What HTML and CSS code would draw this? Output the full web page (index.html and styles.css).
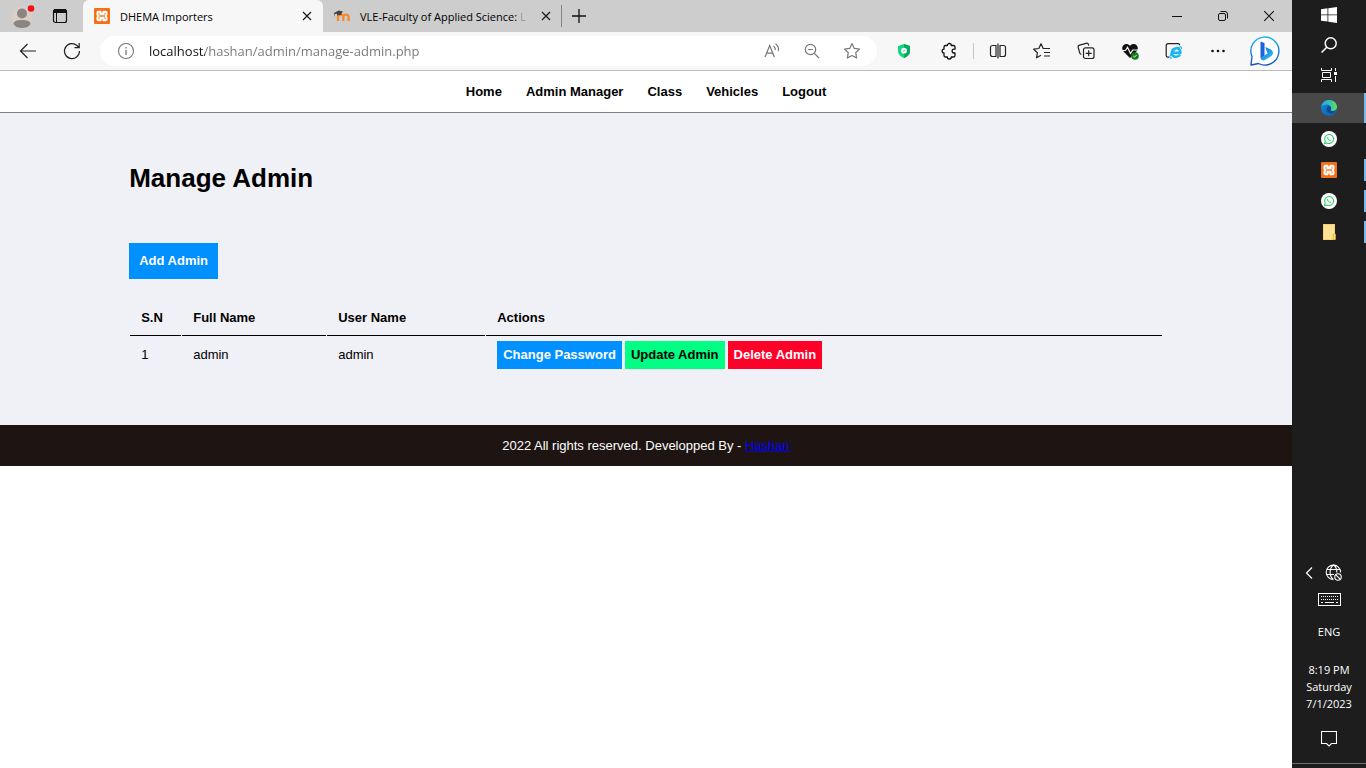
FILE: index.html
```html
<!DOCTYPE html>
<html lang="en">
<head>
<meta charset="utf-8">
<title>DHEMA Importers</title>
<link rel="stylesheet" href="styles.css">
</head>
<body>
<svg class="defs" aria-hidden="true">
  <defs>
    <linearGradient id="edge-blue" x1="0" y1="0" x2="1" y2="1"><stop offset="0" stop-color="#1a86d8"/><stop offset="1" stop-color="#0f5ba8"/></linearGradient>
    <linearGradient id="edge-green" x1="0" y1="0" x2="1" y2="0"><stop offset="0" stop-color="#2aa9e0"/><stop offset=".6" stop-color="#35c4b0"/><stop offset="1" stop-color="#6fdc4a"/></linearGradient>
    <linearGradient id="bing-ring" x1="0" y1="0" x2="0" y2="1"><stop offset="0" stop-color="#19b5f1"/><stop offset="1" stop-color="#1a4fc4"/></linearGradient>
    <linearGradient id="bing-b" x1="0" y1="0" x2="1" y2="1"><stop offset="0" stop-color="#1b6fe0"/><stop offset="1" stop-color="#27c4f2"/></linearGradient>
  </defs>
  <symbol id="xampp" viewBox="0 0 16 16">
    <rect width="16" height="16" rx="1" fill="#f2701a"/>
    <path d="M4.500 2.800h1.700c1 0 1.400.7 1.400 1.500v.5h.8v-.5c0-.8.4-1.500 1.400-1.500h1.700c1.300 0 2 .8 2 1.900v1.800c0 .7-.4 1.200-.9 1.500.5.3.9.8.9 1.500v1.800c0 1.100-.7 1.900-2 1.900H9.800c-1 0-1.400-.7-1.400-1.500v-.5h-.8v.5c0 .8-.4 1.500-1.400 1.500H4.500c-1.300 0-2-.8-2-1.900V9.500c0-.7.4-1.200.9-1.500-.5-.3-.9-.8-.9-1.500V4.700c0-1.100.7-1.900 2-1.900z" fill="#fff"/>
    <path d="M5 4.700v1.200C5 7.400 5.700 8 6.800 8h2.400C10.300 8 11 7.400 11 5.900V4.700M5 11.300v-1.200C5 8.600 5.700 8 6.800 8h2.400c1.100 0 1.800.6 1.800 2.100v1.200" fill="none" stroke="#f2701a" stroke-width=".9"/>
  </symbol>
  <symbol id="whatsapp" viewBox="0 0 16 16">
    <circle cx="8" cy="8" r="8" fill="#fff"/>
    <path d="M3.400 12.700l.8-2.500a4.500 4.500 0 1 1 1.700 1.700z" fill="none" stroke="#35cf6c" stroke-width="1.100"/>
    <path d="M6.500 5.800c-.8.600-.4 1.900.7 3s2.400 1.500 3 .7l-1.100-.9-.7.400-1.200-1.200.400-.7z" fill="#35cf6c"/>
  </symbol>
  <symbol id="close" viewBox="0 0 10 10"><path d="M1 1l8 8M9 1L1 9" fill="none" stroke="#1a1a1a" stroke-width="1.200"/></symbol>
</svg>

<div class="browser">
  <header class="titlebar">
    <button class="chrome-btn profile" aria-label="Profile">
      <svg width="24" height="28" viewBox="0 0 24 28"><circle cx="11" cy="14.500" r="10.500" fill="#d8cfc9"/><circle cx="11" cy="11.500" r="5" fill="#8a8581"/><path d="M2.500 22c0-3 3.500-4 8.500-4s8.500 1 8.500 4c-2 3-5 4-8.500 4s-6.500-1-8.500-4z" fill="#8a8581"/><circle cx="20" cy="6.500" r="3.300" fill="#f50f0f"/></svg>
    </button>
    <button class="chrome-btn workspaces" aria-label="Tab actions">
      <svg width="16" height="16" viewBox="0 0 16 16"><rect x="1.500" y="1.500" width="13" height="13" rx="2" fill="none" stroke="#111" stroke-width="1.200"/><path d="M1.500 4.500v-1a2 2 0 0 1 2-2h9a2 2 0 0 1 2 2v1z" fill="#111" stroke="#111"/><path d="M4.500 5v9" stroke="#111"/></svg>
    </button>
    <div class="tab tab-active">
      <svg width="16" height="16"><use href="#xampp"/></svg>
      <span class="tab-title">DHEMA Importers</span>
      <button class="chrome-btn tab-close" aria-label="Close tab"><svg width="10" height="10"><use href="#close"/></svg></button>
    </div>
    <div class="tab">
      <svg width="16" height="16" viewBox="0 0 16 16"><path d="M4 13V8.800a2.700 2.700 0 0 1 5.300 0V13M9.300 13V8.800a2.700 2.700 0 0 1 5.300 0V13" fill="none" stroke="#f68b28" stroke-width="2.300"/><path d="M0 5l4.500-2.600L9 3.500 7.600 5.200v1.600L3 7.400V5.800L1 6v3z" fill="#4a4440"/></svg>
      <span class="tab-title">VLE-Faculty of Applied Science: <span class="faded">L</span></span>
      <button class="chrome-btn tab-close" aria-label="Close tab"><svg width="10" height="10"><use href="#close"/></svg></button>
    </div>
    <button class="chrome-btn new-tab" aria-label="New tab"><svg width="14" height="14" viewBox="0 0 14 14"><path d="M7 0v14M0 7h14" stroke="#111" stroke-width="1.300"/></svg></button>
    <div class="window-controls">
      <button class="chrome-btn" aria-label="Minimize"><svg width="10" height="10" viewBox="0 0 10 10"><path d="M0 5.500h10" stroke="#111"/></svg></button>
      <button class="chrome-btn" aria-label="Restore"><svg width="10" height="10" viewBox="0 0 10 10" fill="none" stroke="#111"><rect x=".5" y="2.500" width="7" height="7" rx="1.500"/><path d="M2.500.5H7A2.500 2.500 0 0 1 9.500 3v4.500"/></svg></button>
      <button class="chrome-btn" aria-label="Close window"><svg width="12" height="12" viewBox="0 0 10 10"><path d="M1 1l8 8M9 1L1 9" stroke="#111" stroke-width=".9"/></svg></button>
    </div>
  </header>

  <div class="toolbar">
    <button class="chrome-btn tool" aria-label="Back"><svg width="18" height="16" viewBox="0 0 18 16" fill="none" stroke="#222" stroke-width="1.200"><path d="M17 8H1.500M8.500 1L1.500 8l7 7"/></svg></button>
    <button class="chrome-btn tool" aria-label="Refresh"><svg width="18" height="18" viewBox="0 0 18 18" fill="none" stroke="#222" stroke-width="1.200"><path d="M16.500 9A7.500 7.500 0 1 1 14 3.500L16 5.500M16.200 1v4.700h-4.700"/></svg></button>
    <div class="address">
      <button class="chrome-btn site-info" aria-label="Site information"><svg width="18" height="18" viewBox="0 0 18 18" fill="none" stroke="#777"><circle cx="9" cy="9" r="7.500" stroke-width="1.100"/><path d="M9 8v5M9 5v1.500" stroke-width="1.300"/></svg></button>
      <input class="url" type="text" aria-label="Address" value="localhost/hashan/admin/manage-admin.php">
      <button class="chrome-btn address-tool" aria-label="Read aloud"><svg width="18" height="18" viewBox="0 0 18 18" fill="none" stroke="#777"><path d="M2 15l4.700-11.500L11.400 15M3.600 11.200h6.200" stroke-width="1.200"/><path d="M10.500 4q2 1.700 1.600 4.200M12.500 1.800q4 3.200 2.800 7.400" stroke-width="1.100"/></svg></button>
      <button class="chrome-btn address-tool" aria-label="Zoom"><svg width="16" height="16" viewBox="0 0 16 16" fill="none" stroke="#777" stroke-width="1.200"><circle cx="6.500" cy="6.500" r="5.200"/><path d="M4 6.500h5M10.300 10.300L15 15"/></svg></button>
      <button class="chrome-btn address-tool" aria-label="Add to favorites"><svg width="18" height="18" viewBox="0 0 18 18" fill="none" stroke="#777" stroke-width="1.200" stroke-linejoin="round"><path d="M9 1.500l2.300 4.900 5.200.7-3.800 3.600.9 5.300L9 13.500 4.400 16l.9-5.300L1.500 7.100l5.200-.7z"/></svg></button>
    </div>
    <button class="chrome-btn tool shield" aria-label="Protection extension"><svg width="14" height="16" viewBox="0 0 14 16"><path d="M7 1l6 2v5c0 3.500-2.500 5.500-6 7-3.500-1.500-6-3.500-6-7V3z" fill="#12d67c"/><path d="M7 1l6 2v5c0 3.500-2.500 5.500-6 7z" fill="#07a860"/><circle cx="7" cy="7.700" r="2.900" fill="#fff"/><path d="M6 8.800l2-2" stroke="#5caecb"/></svg></button>
    <button class="chrome-btn tool extensions" aria-label="Extensions"><svg width="16" height="18" viewBox="0 0 16 18" fill="none" stroke="#111" stroke-width="1.300" stroke-linejoin="round"><path d="M4.500 3.500h1.800a2 2 0 0 1 4 0h2.200a1.500 1.500 0 0 1 1.500 1.500v2.200h-1a1.900 1.900 0 0 0 0 3.800h1v2.500a1.500 1.500 0 0 1-1.500 1.500h-2.200a2 2 0 0 1-4 0H4.500A1.500 1.500 0 0 1 3 13.500V11a1.900 1.900 0 0 1 0-3.800V5a1.500 1.500 0 0 1 1.500-1.500z"/></svg></button>
    <span class="divider"></span>
    <button class="chrome-btn tool" aria-label="Split screen"><svg width="18" height="18" viewBox="0 0 18 18" fill="none" stroke="#222" stroke-width="1.200"><path d="M7 3.500H3.500a2 2 0 0 0-2 2v7a2 2 0 0 0 2 2H7zM11 3.500h3.500a2 2 0 0 1 2 2v7a2 2 0 0 1-2 2H11zM9 1.500v15"/></svg></button>
    <button class="chrome-btn tool" aria-label="Favorites"><svg width="18" height="18" viewBox="0 0 18 18" fill="none" stroke="#222" stroke-width="1.200" stroke-linejoin="round"><path d="M8 13.300l-4.500 2.500.9-5-3.700-3.600 5.100-.7L8 1.700l2.200 4.800H17M11 10.500h6M11 14h6"/></svg></button>
    <button class="chrome-btn tool" aria-label="Collections"><svg width="18" height="18" viewBox="0 0 18 18" fill="none" stroke="#222" stroke-width="1.200"><rect x="6.500" y="5.800" width="10.500" height="10.700" rx="2"/><path d="M11.700 8.300v6M8.700 11.300h6M4.300 12.500l-1.300-.8L1.200 5.500a2 2 0 0 1 1.400-2.400l6.500-1.800a2 2 0 0 1 2.400 1.400l.3 1"/></svg></button>
    <button class="chrome-btn tool" aria-label="Browser essentials"><svg width="18" height="18" viewBox="0 0 18 18"><path d="M9 16L2.500 9.500C-1.500 5 4.500-.8 9 3.800 13.500-.8 19.500 5 15.500 9.500z" fill="#111"/><path d="M0 8.500h4.500l2-3.300 3 6.300 2.200-3.500H18" fill="none" stroke="#f7f7f7" stroke-width="1.200"/><circle cx="14" cy="14" r="3.800" fill="#107c1c"/><path d="M12.300 14l1.200 1.200 2.200-2.300" fill="none" stroke="#fff" stroke-width=".9"/></svg></button>
    <button class="chrome-btn tool" aria-label="Internet Explorer mode"><svg width="18" height="18" viewBox="0 0 18 18" fill="none"><path d="M4 15.200H3a1.800 1.800 0 0 1-1.800-1.800V3.500A1.800 1.800 0 0 1 3 1.700h10a1.800 1.800 0 0 1 1.800 1.500" stroke="#222" stroke-width="1.200"/><path d="M6.800 10.700h8.600c.2-6.200-8.600-6-8.600 0 0 4.800 6.200 5.200 8.300 1.900" stroke="#19b4f2" stroke-width="2.500"/><path d="M7 15.800c-3.500 1.500-3-3 2-7.300 4-3.600 8.500-5.200 7.300-1.500" stroke="#19b4f2" stroke-width="1.100"/></svg></button>
    <button class="chrome-btn tool" aria-label="More"><svg width="14" height="4" viewBox="0 0 14 4" fill="#111"><circle cx="1.500" cy="2" r="1.300"/><circle cx="7" cy="2" r="1.300"/><circle cx="12.500" cy="2" r="1.300"/></svg></button>
    <button class="chrome-btn bing" aria-label="Bing Chat"><svg width="32" height="32" viewBox="0 0 32 32"><path d="M2 30l1-8.500A14 14 0 1 1 9.500 28.500z" fill="#fff" stroke="url(#bing-ring)" stroke-width="1.400" stroke-linejoin="round"/><path d="M11.500 6.500l4 1.600v13l-4 2.200z" fill="#1c62dc"/><path d="M16.200 12l5.300 2.300c3.300 1.600 3 5.300.5 7l-6 3.700c-2 1-4 .3-4.500-2l7-4.500z" fill="url(#bing-b)"/></svg></button>
  </div>

  <div class="page">
    <nav class="menu">
      <a href="#home">Home</a>
      <a href="#admin">Admin Manager</a>
      <a href="#class">Class</a>
      <a href="#vehicles">Vehicles</a>
      <a href="#logout">Logout</a>
    </nav>
    <main class="content">
      <h1>Manage Admin</h1>
      <a class="btn btn-add" href="#add">Add Admin</a>
      <table class="admins">
        <colgroup><col class="col-sn"><col class="col-name"><col class="col-user"><col></colgroup>
        <thead>
          <tr><th>S.N</th><th>Full Name</th><th>User Name</th><th>Actions</th></tr>
        </thead>
        <tbody>
          <tr>
            <td>1</td><td>admin</td><td>admin</td>
            <td>
              <div class="actions">
                <a class="btn" href="#password">Change Password</a>
                <a class="btn btn-update" href="#update">Update Admin</a>
                <a class="btn btn-delete" href="#delete">Delete Admin</a>
              </div>
            </td>
          </tr>
        </tbody>
      </table>
    </main>
    <footer class="footer">2022 All rights reserved. Developped By - <a href="#hashan">Hashan</a></footer>
  </div>
</div>

<aside class="taskbar">
  <button class="task" aria-label="Start"><svg width="16" height="16" viewBox="0 0 16 16" fill="#fff"><path d="M0 2.200l6.500-.9v6.200H0zM7.300 1.200L16 0v7.500H7.300zM0 8.300h6.500v6.300L0 13.700zM7.300 8.300H16V16l-8.700-1.200z"/></svg></button>
  <button class="task" aria-label="Search"><svg width="16" height="16" viewBox="0 0 16 16" fill="none" stroke="#fff" stroke-width="1.500"><circle cx="9.700" cy="6.300" r="5.500"/><path d="M5.800 10.200L.5 15.500"/></svg></button>
  <button class="task" aria-label="Task view"><svg width="16" height="16" viewBox="0 0 16 16" fill="none" stroke="#fff"><path d="M.5 1v2.500h10V1M.5 15v-2.500h10V15M1.500 5.500h8v5h-8zM14.500 1v3M14.500 9v6"/><path d="M13 5h3v3h-3z" fill="#fff" stroke="none"/></svg></button>
  <div class="apps">
    <button class="task task-active running" aria-label="Microsoft Edge"><svg width="16" height="16" viewBox="0 0 16 16"><circle cx="8" cy="8" r="8" fill="url(#edge-blue)"/><path d="M.2 7C1 2.500 4.500 0 8 0c5 0 8 3.500 8 7 0 2.500-2 4-4.300 4-1.700 0-2.400-.7-1.900-1.500C11 7.300 8.700 4.600 5.500 4.600 3 4.600 1 5.800.2 7z" fill="url(#edge-green)"/><path d="M5.500 9.500c0-2 1.200-3.300 2.700-3.700 1.800.7 2.300 2.400 1.600 3.700-.5.800.2 1.500 1.900 1.500 1.200 0 2.300-.3 3-1-.9 2.500-2.600 3.500-4.200 3.500-3 0-5-1.800-5-4z" fill="#104a8e"/></svg></button>
    <button class="task" aria-label="WhatsApp"><svg width="16" height="16"><use href="#whatsapp"/></svg></button>
    <button class="task running short" aria-label="XAMPP"><svg width="16" height="16"><use href="#xampp"/></svg></button>
    <button class="task running short" aria-label="WhatsApp chat"><svg width="16" height="16"><use href="#whatsapp"/></svg></button>
    <button class="task running short" aria-label="File Explorer"><svg width="14" height="16" viewBox="0 0 14 16"><path d="M1 0h12v16H1z" fill="#f3c94e"/><path d="M1.500.5h11V10h-2v5.500h-9z" fill="#fde293"/><path d="M11.500 10h2v5.500h-2z" fill="#fde293" stroke="#d9ae35" stroke-width=".6"/></svg></button>
  </div>
  <div class="tray">
    <div class="tray-row">
      <button class="chrome-btn" aria-label="Show hidden icons"><svg width="8" height="12" viewBox="0 0 8 12"><path d="M7 .5L1.500 6 7 11.500" fill="none" stroke="#fff" stroke-width="1.200"/></svg></button>
      <button class="chrome-btn" aria-label="Network"><svg width="17" height="17" viewBox="0 0 17 17" fill="none" stroke="#fff" stroke-width="1.100"><path d="M8.500 15.500A7.200 7.200 0 1 1 15.600 8.500M1.500 5.500h13.500M1.500 10.500H9M8.500 15.500c-4.500-3-4.500-11.500 0-14.500M8.500 1c2.500 1.800 3.500 4.500 3.300 7.500"/><circle cx="13" cy="13" r="3.200"/><path d="M10.800 10.800l4.400 4.400"/></svg></button>
    </div>
    <button class="chrome-btn keyboard" aria-label="Touch keyboard"><svg width="23" height="13" viewBox="0 0 23 13" fill="none" stroke="#fff"><rect x=".5" y=".5" width="22" height="12"/><path d="M3 3.500h17M3 6.500h17" stroke-dasharray="1 1"/><path d="M3 9.500h2M7 9.500h9M18 9.500h2"/></svg></button>
    <button class="chrome-btn lang">ENG</button>
    <button class="chrome-btn clock"><span>8:19 PM</span><span>Saturday</span><span>7/1/2023</span></button>
    <button class="chrome-btn notify" aria-label="Notifications"><svg width="16" height="16" viewBox="0 0 16 16" fill="none" stroke="#fff" stroke-width="1.100"><path d="M.5.500h15v12h-5L8 15l-2.500-2.500h-5z"/></svg></button>
  </div>
</aside>
</body>
</html>
```

FILE: styles.css
```css
* { box-sizing: border-box; }

body {
  margin: 0;
  min-height: 100vh;
  display: flex;
  background: #fff;
  font-family: "Liberation Sans", Arial, sans-serif;
  font-size: 13px;
  color: #000;
}

svg { display: block; flex: none; }
.defs { position: absolute; width: 0; height: 0; }

.browser {
  flex: 1;
  min-width: 0;
  display: flex;
  flex-direction: column;
}

.chrome-btn {
  display: flex;
  align-items: center;
  justify-content: center;
  flex: none;
  padding: 0;
  border: 0;
  background: none;
  font: inherit;
  color: inherit;
}

/* Tab strip */
.titlebar {
  display: flex;
  height: 32px;
  background: #cdcdcd;
  font-family: "Open Sans", "Noto Sans", sans-serif;
  font-size: 11px;
}
.profile { width: 46px; }
.workspaces { width: 28px; margin-right: 9px; }
.tab {
  display: flex;
  align-items: center;
  width: 239px;
  padding: 0 10px 0 11px;
  border-right: 1px solid transparent;
}
.tab-active {
  width: 240px;
  background: #f7f7f7;
  border-radius: 6px 6px 0 0;
}
.tab:not(.tab-active) {
  border-image: linear-gradient(transparent 6px, #888 6px, #888 26px, transparent 26px) 1;
}
.tab-title {
  flex: 1;
  min-width: 0;
  margin-left: 10px;
  white-space: nowrap;
}
.faded { color: #999; }
.tab-close { width: 10px; height: 10px; margin-left: 8px; }
.new-tab { width: 34px; }
.window-controls { display: flex; margin-left: auto; }
.window-controls .chrome-btn { width: 46px; }

/* Address bar and browser tools */
.toolbar {
  display: flex;
  align-items: center;
  height: 39px;
  padding: 0 2px 0 6px;
  background: #f7f7f7;
  border-bottom: 1px solid #bcbcbc;
}
.tool { width: 44px; height: 30px; }
.address {
  display: flex;
  align-items: center;
  flex: 1;
  min-width: 0;
  height: 30px;
  margin: 0 5px 0 6px;
  padding: 0 5px 0 17px;
  border-radius: 15px;
  background: #fff;
}
.site-info { width: 18px; }
.url {
  flex: 1;
  min-width: 0;
  margin-left: 14px;
  padding: 0;
  border: 0;
  outline: 0;
  font-family: "Open Sans", "Noto Sans", sans-serif;
  font-size: 13px;
  color: transparent;
  background: linear-gradient(to right, #111 56px, #767676 56px);
  background-clip: text;
  -webkit-background-clip: text;
}
.address-tool { width: 40px; height: 30px; }
.extensions { width: 46px; }
.divider { width: 1px; height: 16px; margin: 0 2px 0 1px; background: #c4c4c4; }
.bing { width: 50px; height: 38px; }

/* Site */
.page a { text-decoration: none; }
.menu {
  display: flex;
  justify-content: center;
  gap: 24px;
  padding: 13px 0;
  border-bottom: 1px solid #808080;
  background: #fff;
  line-height: 15px;
  font-weight: bold;
}
.menu a { color: #000; }
.content {
  padding: 50px 10% 51px;
  background: #f0f1f6;
}
h1 {
  margin: 0 0 50px;
  font-size: 26px;
  line-height: 30px;
}
.btn {
  display: inline-block;
  padding: 6px;
  background: #0090ff;
  color: #fff;
  font-weight: bold;
  line-height: 16px;
}
.btn-add { padding: 10px; }
.btn-update { background: #00ff84; color: #000; }
.btn-delete { background: #ff0028; }
.actions { display: flex; gap: 3px; }
.admins {
  width: 100%;
  margin-top: 20px;
  table-layout: fixed;
  border-spacing: 1px;
  line-height: 16px;
}
.col-sn { width: 51px; }
.col-name { width: 144px; }
.col-user { width: 158px; }
.admins th {
  padding: 10px 11px 9px;
  border-bottom: 1px solid #000;
  text-align: left;
}
.admins td { padding: 4px 11px; }
.footer {
  padding: 13px 0;
  background: #1e1412;
  color: #fff;
  line-height: 15px;
  text-align: center;
}
.page .footer a { color: #00f; text-decoration: underline; }

/* Desktop taskbar */
.taskbar {
  display: flex;
  flex-direction: column;
  flex: none;
  width: 74px;
  background: #1d1d1d;
  color: #fff;
  font-family: "Open Sans", "Noto Sans", sans-serif;
  font-size: 11px;
}
.task {
  display: flex;
  align-items: center;
  justify-content: center;
  height: 30px;
  padding: 0;
  border: 0;
  background: none;
}
.apps {
  display: flex;
  flex-direction: column;
  gap: 1px;
  margin-top: 3px;
}
.task-active { background-color: #484848; }
.running {
  background-image: linear-gradient(#76b9ed, #76b9ed);
  background-repeat: no-repeat;
  background-position: right center;
  background-size: 2px 30px;
}
.short { background-size: 2px 22px; }
.tray {
  display: flex;
  flex-direction: column;
  align-items: center;
  margin-top: auto;
  margin-bottom: 4px;
  padding-bottom: 16px;
  border-bottom: 1px solid #707070;
}
.tray-row {
  display: flex;
  gap: 12px;
  margin-bottom: 12px;
  padding-right: 12px;
}
.keyboard { margin-bottom: 17px; }
.lang { line-height: 17px; margin-bottom: 21px; }
.clock { flex-direction: column; line-height: 17px; margin-bottom: 19px; }
```
